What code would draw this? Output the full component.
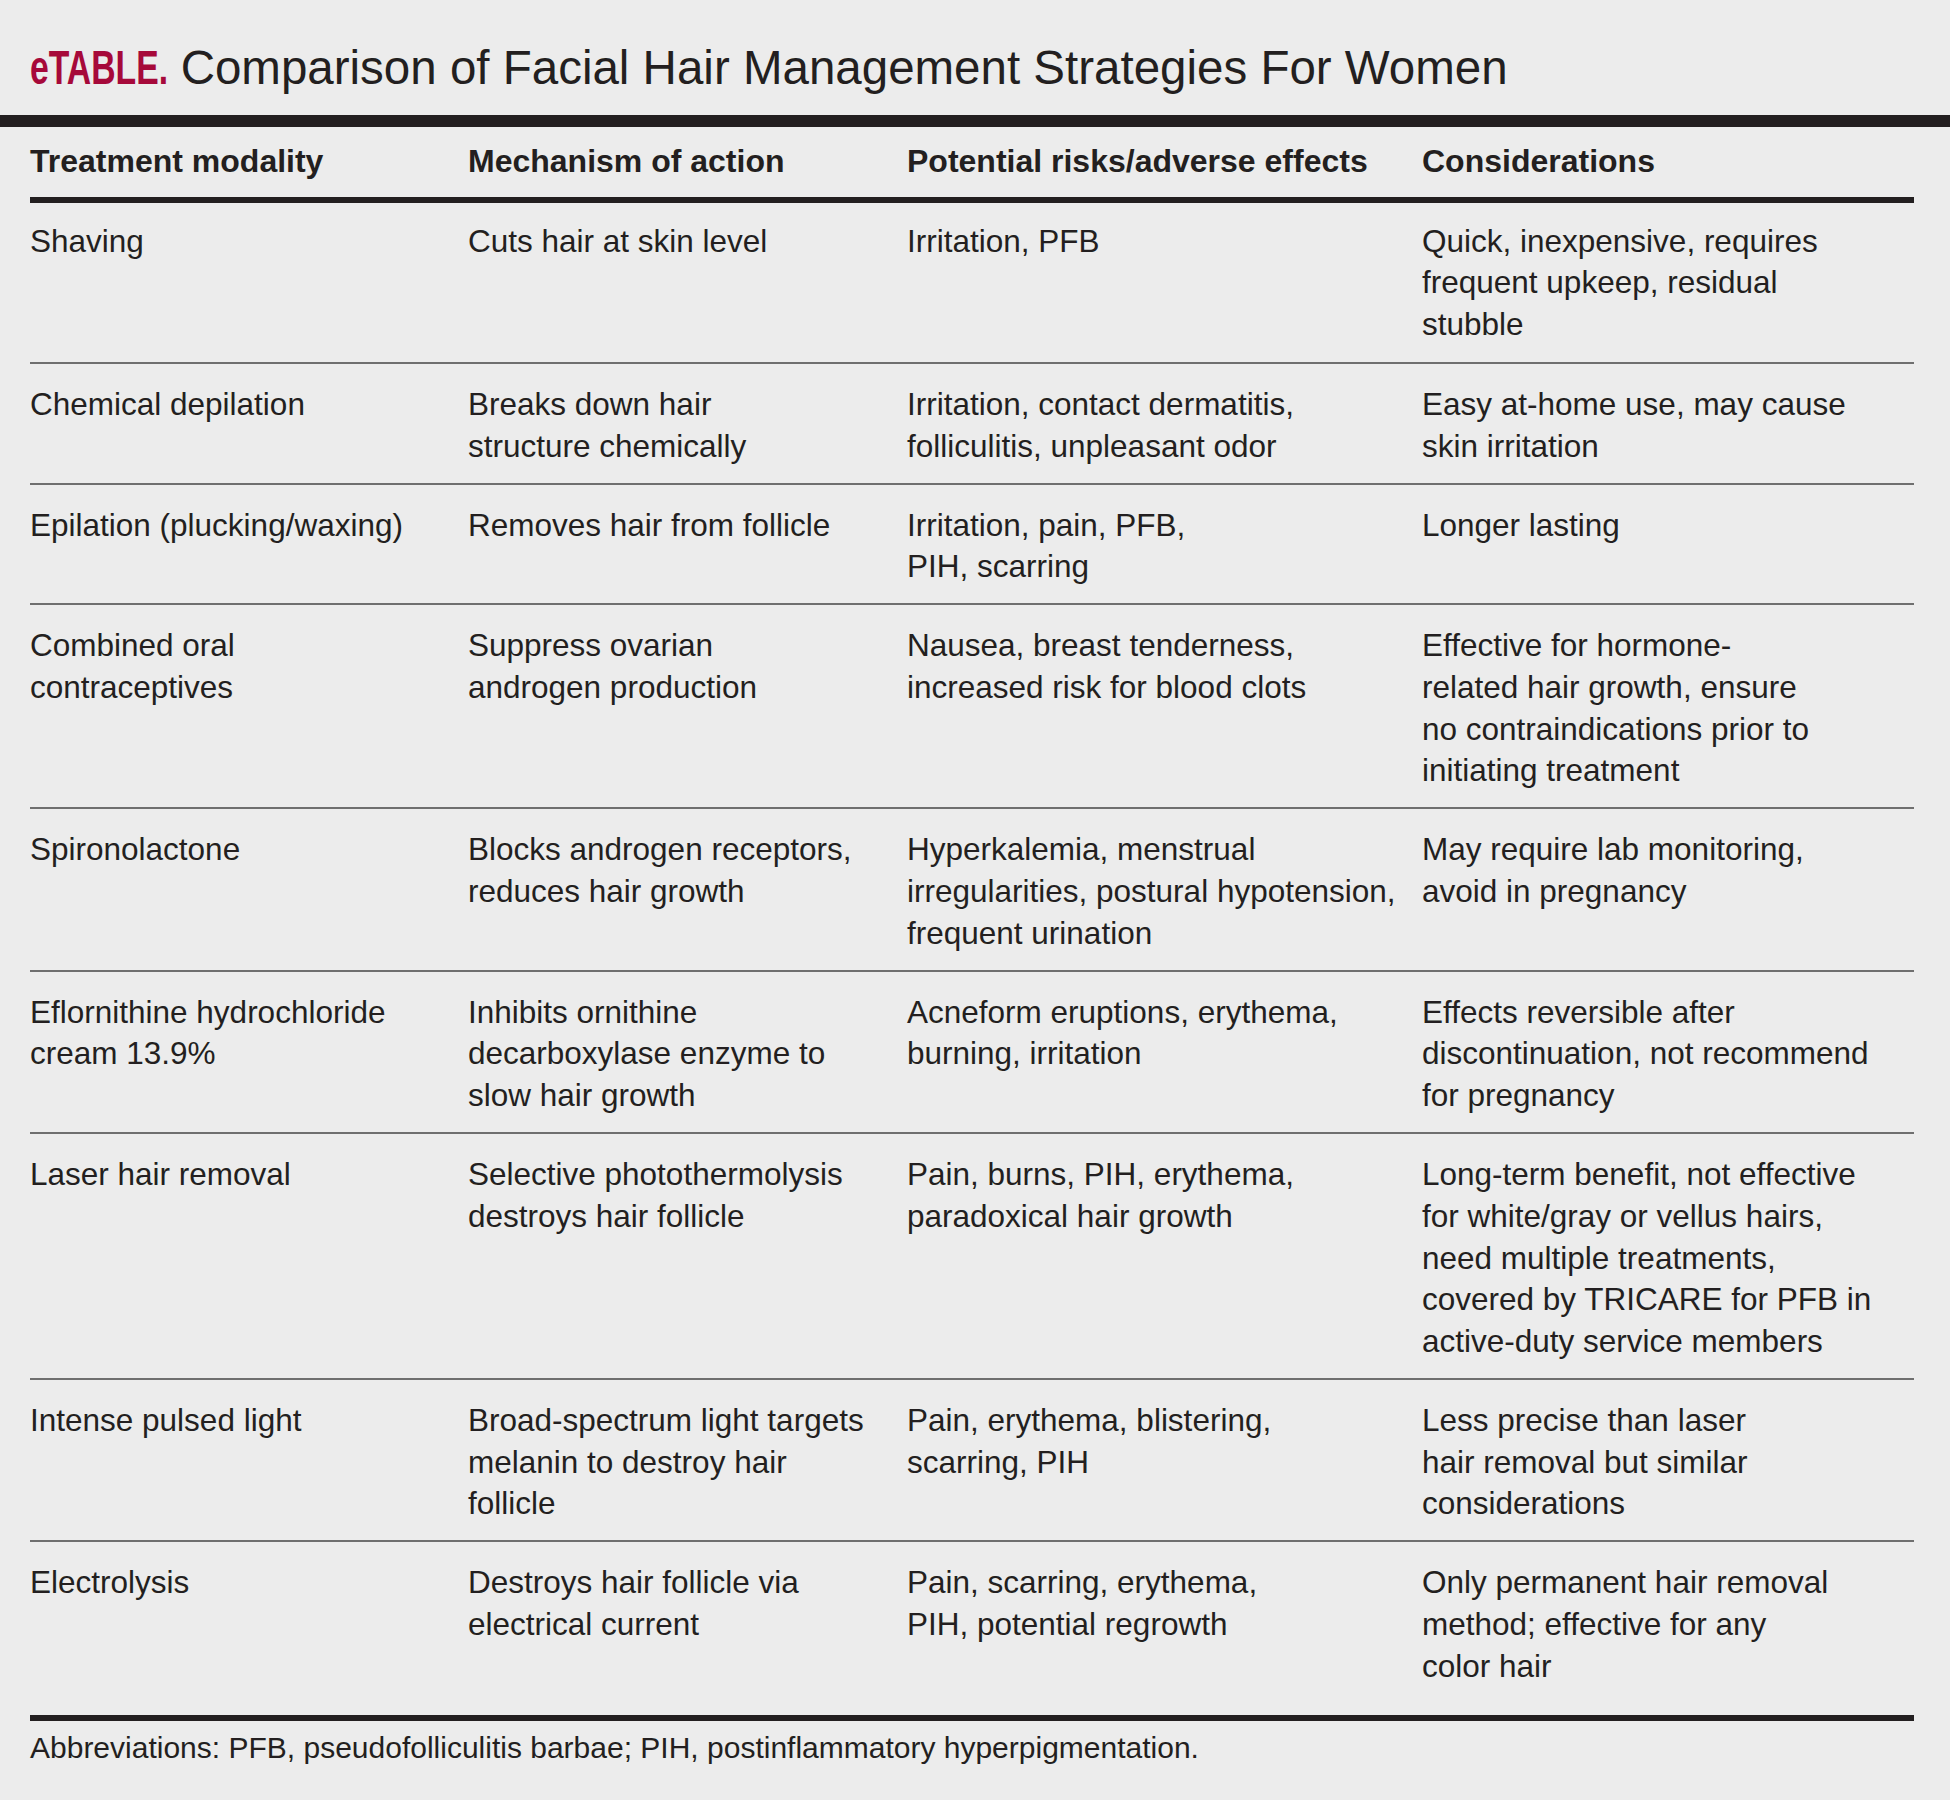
import React from "react";

const COLS = "grid grid-cols-[438px_439px_515px_492px]";

const HEADERS = [
  "Treatment modality",
  "Mechanism of action",
  "Potential risks/adverse effects",
  "Considerations",
];

// Line breaks follow the printed table, so each cell is a list of lines.
const ROWS = [
  [
    ["Shaving"],
    ["Cuts hair at skin level"],
    ["Irritation, PFB"],
    ["Quick, inexpensive, requires", "frequent upkeep, residual", "stubble"],
  ],
  [
    ["Chemical depilation"],
    ["Breaks down hair", "structure chemically"],
    ["Irritation, contact dermatitis,", "folliculitis, unpleasant odor"],
    ["Easy at-home use, may cause", "skin irritation"],
  ],
  [
    ["Epilation (plucking/waxing)"],
    ["Removes hair from follicle"],
    ["Irritation, pain, PFB,", "PIH, scarring"],
    ["Longer lasting"],
  ],
  [
    ["Combined oral", "contraceptives"],
    ["Suppress ovarian", "androgen production"],
    ["Nausea, breast tenderness,", "increased risk for blood clots"],
    [
      "Effective for hormone-",
      "related hair growth, ensure",
      "no contraindications prior to",
      "initiating treatment",
    ],
  ],
  [
    ["Spironolactone"],
    ["Blocks androgen receptors,", "reduces hair growth"],
    ["Hyperkalemia, menstrual", "irregularities, postural hypotension,", "frequent urination"],
    ["May require lab monitoring,", "avoid in pregnancy"],
  ],
  [
    ["Eflornithine hydrochloride", "cream 13.9%"],
    ["Inhibits ornithine", "decarboxylase enzyme to", "slow hair growth"],
    ["Acneform eruptions, erythema,", "burning, irritation"],
    ["Effects reversible after", "discontinuation, not recommend", "for pregnancy"],
  ],
  [
    ["Laser hair removal"],
    ["Selective photothermolysis", "destroys hair follicle"],
    ["Pain, burns, PIH, erythema,", "paradoxical hair growth"],
    [
      "Long-term benefit, not effective",
      "for white/gray or vellus hairs,",
      "need multiple treatments,",
      "covered by TRICARE for PFB in",
      "active-duty service members",
    ],
  ],
  [
    ["Intense pulsed light"],
    ["Broad-spectrum light targets", "melanin to destroy hair", "follicle"],
    ["Pain, erythema, blistering,", "scarring, PIH"],
    ["Less precise than laser", "hair removal but similar", "considerations"],
  ],
  [
    ["Electrolysis"],
    ["Destroys hair follicle via", "electrical current"],
    ["Pain, scarring, erythema,", "PIH, potential regrowth"],
    ["Only permanent hair removal", "method; effective for any", "color hair"],
  ],
];

const Cell = ({ lines }) => (
  <div className="whitespace-nowrap">
    {lines.map((line) => (
      <div key={line}>{line}</div>
    ))}
  </div>
);

const rowPadding = (i) => {
  if (i === 0) return "pt-[18px] pb-[16px] border-b-2 border-[#6f6f6f]";
  if (i === ROWS.length - 1) return "pt-[20px] pb-[28px]";
  return "pt-[20px] pb-[15.3px] border-b-2 border-[#6f6f6f]";
};

export default function App() {
  return (
    <div className="w-[1950px] h-[1800px] bg-[#ececec] text-[#231f20] font-['Liberation_Sans',Arial,sans-serif]">
      <h1 className="pt-[44px] pl-[30px] text-[47.5px] leading-none font-normal whitespace-nowrap">
        <span className="inline-block font-bold text-[#a6093a] origin-left scale-x-[0.71] mr-[-57px]">
          eTABLE.
        </span>{" "}
        Comparison of Facial Hair Management Strategies For Women
      </h1>

      <div className="mt-[23.5px] h-[12px] bg-[#231f20]" />

      <div className="ml-[30px] w-[1884px]">
        <div className={`${COLS} pt-[14px] pb-[14px] text-[32px] leading-[41.7px] font-bold`}>
          {HEADERS.map((h) => (
            <div key={h} className="whitespace-nowrap">{h}</div>
          ))}
        </div>
        <div className="h-[6px] bg-[#231f20]" />

        {ROWS.map((row, i) => (
          <div key={row[0][0]} className={`${COLS} ${rowPadding(i)} text-[31.5px] leading-[41.7px]`}>
            {row.map((cell, j) => (
              <Cell key={j} lines={cell} />
            ))}
          </div>
        ))}

        <div className="h-[6px] bg-[#231f20]" />
        <p className="pt-[9px] text-[30px] leading-[36px] whitespace-nowrap">
          Abbreviations: PFB, pseudofolliculitis barbae; PIH, postinflammatory hyperpigmentation.
        </p>
      </div>
    </div>
  );
}
